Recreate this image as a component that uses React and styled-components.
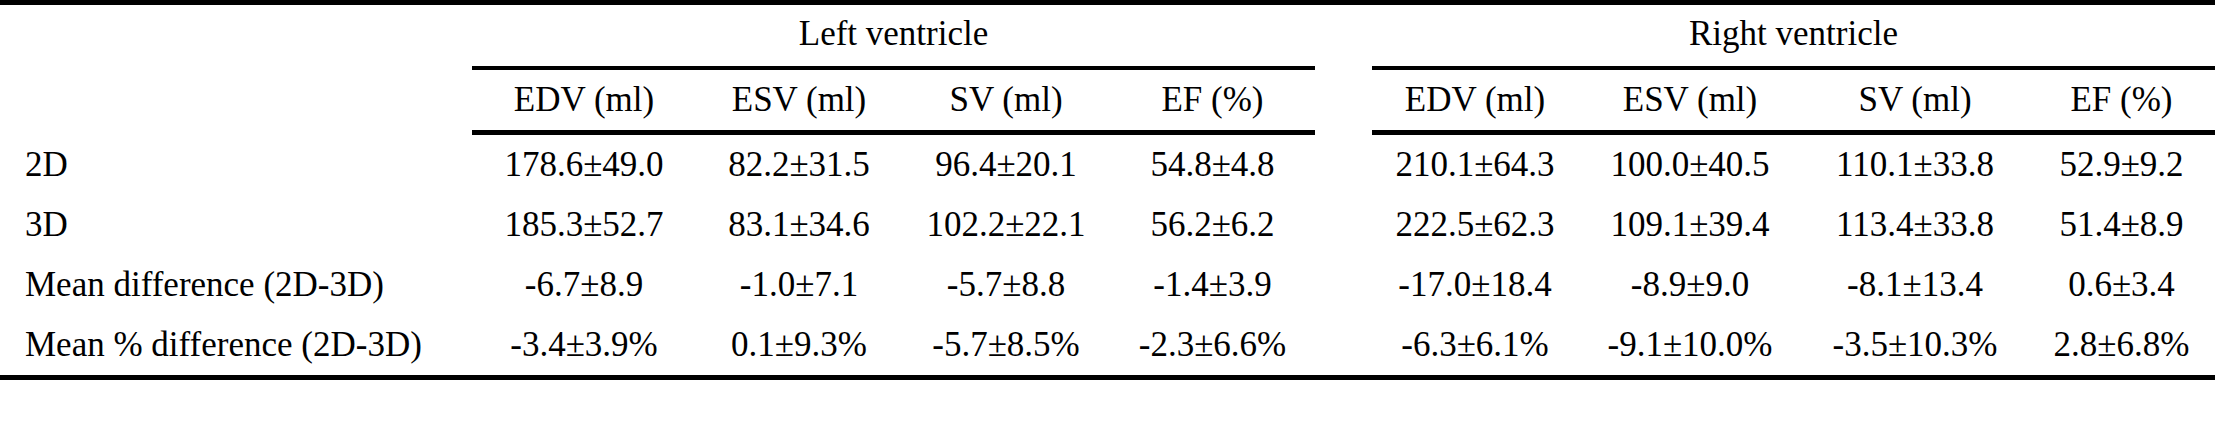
import React from "react";
import styled, { createGlobalStyle } from "styled-components";

const GlobalStyle = createGlobalStyle`
  html, body {
    margin: 0;
    padding: 0;
    background: #fff;
  }
  body {
    font-family: "Liberation Serif", "Times New Roman", serif;
    color: #000;
  }
`;

const COLS = "472px 224px 206px 208px 205px 57px 206px 224px 226px 187px";
const GROUP_COLS = "472px 843px 57px 843px";

const Sheet = styled.div`
  width: 2215px;
  border-top: 5px solid #000;
  border-bottom: 5px solid #000;
  font-size: 35px;
  line-height: 1.15;
`;

const Row = styled.div`
  display: grid;
  grid-template-columns: ${(p) => p.$cols};
`;

const GroupTitle = styled.div`
  height: 65px;
  box-sizing: border-box;
  border-bottom: ${(p) => (p.$rule ? "4px solid #000" : "none")};
  display: flex;
  align-items: center;
  justify-content: center;
  padding-bottom: 2px;
`;

const ColHead = styled.div`
  height: 65px;
  box-sizing: border-box;
  border-bottom: ${(p) => (p.$rule ? "5px solid #000" : "none")};
  display: flex;
  align-items: center;
  justify-content: center;
`;

const Cell = styled.div`
  height: 60px;
  display: flex;
  align-items: center;
  justify-content: ${(p) => (p.$label ? "flex-start" : "center")};
  padding-left: ${(p) => (p.$label ? "25px" : "0")};
  white-space: nowrap;
`;

const Spacer = styled.div``;

const heads = ["EDV (ml)", "ESV (ml)", "SV (ml)", "EF (%)"];

const rows = [
  ["2D", "178.6±49.0", "82.2±31.5", "96.4±20.1", "54.8±4.8", "210.1±64.3", "100.0±40.5", "110.1±33.8", "52.9±9.2"],
  ["3D", "185.3±52.7", "83.1±34.6", "102.2±22.1", "56.2±6.2", "222.5±62.3", "109.1±39.4", "113.4±33.8", "51.4±8.9"],
  ["Mean difference (2D-3D)", "-6.7±8.9", "-1.0±7.1", "-5.7±8.8", "-1.4±3.9", "-17.0±18.4", "-8.9±9.0", "-8.1±13.4", "0.6±3.4"],
  ["Mean % difference (2D-3D)", "-3.4±3.9%", "0.1±9.3%", "-5.7±8.5%", "-2.3±6.6%", "-6.3±6.1%", "-9.1±10.0%", "-3.5±10.3%", "2.8±6.8%"],
];

const App = () => {
  return (
    <>
      <GlobalStyle />
      <Sheet>
        <Row $cols={GROUP_COLS}>
          <GroupTitle />
          <GroupTitle $rule>Left ventricle</GroupTitle>
          <GroupTitle />
          <GroupTitle $rule>Right ventricle</GroupTitle>
        </Row>
        <Row $cols={COLS}>
          <ColHead />
          {heads.map((h) => (
            <ColHead $rule key={"l" + h}>{h}</ColHead>
          ))}
          <ColHead />
          {heads.map((h) => (
            <ColHead $rule key={"r" + h}>{h}</ColHead>
          ))}
        </Row>
        {rows.map((r) => (
          <Row $cols={COLS} key={r[0]}>
            <Cell $label>{r[0]}</Cell>
            {r.slice(1, 5).map((v, i) => (
              <Cell key={"l" + i}>{v}</Cell>
            ))}
            <Spacer />
            {r.slice(5).map((v, i) => (
              <Cell key={"r" + i}>{v}</Cell>
            ))}
          </Row>
        ))}
      </Sheet>
    </>
  );
};

export default App;
